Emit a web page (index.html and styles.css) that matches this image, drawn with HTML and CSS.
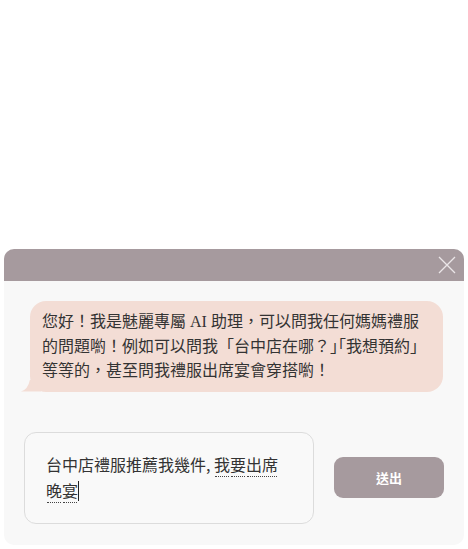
FILE: index.html
```html
<!DOCTYPE html>
<html lang="zh-Hant">
<head>
<meta charset="utf-8">
<link rel="stylesheet" href="styles.css">
</head>
<body>
<div class="chat">
  <div class="chat-header">
    <svg class="close" width="18" height="18" viewBox="0 0 18 18"><path d="M1 1L17 17M17 1L1 17" stroke="#ebe6e8" stroke-width="1.3" fill="none"/></svg>
  </div>
  <div class="chat-body">
    <div class="bubble">您好！我是魅麗專屬 AI 助理，可以問我任何媽媽禮服<br>的問題喲！例如可以問我「台中店在哪？<span class="halt">」「</span>我想預約」<br>等等的，甚至問我禮服出席宴會穿搭喲！</div>
    <div class="composer">
      <div class="input">台中店禮服推薦我幾件, <span class="sp">我</span><span class="sp">要</span><span class="sp">出席</span><br><span class="sp">晚</span><span class="sp">宴</span><span class="caret"></span></div>
      <button class="send">送出</button>
    </div>
  </div>
</div>
</body>
</html>
```
FILE: styles.css
```css
html, body { margin: 0; padding: 0; background: #ffffff; }
body { width: 468px; height: 549px; position: relative; overflow: hidden; }
.chat {
  position: absolute; left: 4px; top: 249px; width: 460px; height: 296px;
  border-radius: 10px; overflow: hidden; background: #f8f8f8;
  display: flex; flex-direction: column;
}
.chat-header {
  height: 32px; background: #a69a9e; flex: none;
  display: flex; justify-content: flex-end; align-items: center; padding-right: 8px;
}
.close { display: block; }
.chat-body { flex: 1; padding: 20px 0 0 26px; position: relative; }
.bubble {
  position: relative; width: 401px; padding: 9px 0 8px 12px; white-space: nowrap;
  background: #f3ddd5; border-radius: 16px;
  font-family: "Liberation Serif", "Noto Sans CJK TC", serif; font-size: 16px; line-height: 24.5px; color: #333;
}
.halt { font-feature-settings: "halt"; }
.bubble::before {
  content: ""; position: absolute; left: -9px; bottom: 0; width: 20px; height: 12px;
  background: #f3ddd5;
  clip-path: path("M0 12 Q7 10 9 0 L20 0 L20 12 Z");
}
.composer { display: flex; align-items: center; margin-top: 40px; margin-left: -6px; }
.input {
  width: 247px; height: 52px; padding: 18px 20px 20px 21px; border: 1px solid #dcdcdc;
  border-radius: 12px; background: #f9f9f9;
  font-family: "Noto Sans CJK TC", sans-serif; font-size: 16px; line-height: 26px; color: #333;
}
.sp { position: relative; }
.sp::after {
  content: ""; position: absolute; left: 1px; right: 1px; bottom: -1px;
  border-bottom: 1px dotted #444;
}
.caret { display: inline-block; width: 1px; height: 20px; background: #222; vertical-align: -4px; }
.send {
  margin-left: 20px; width: 110px; height: 41px; border: none; border-radius: 9px;
  background: #a69a9e; color: #fff; font-family: "Noto Sans CJK TC", sans-serif;
  font-size: 13px; font-weight: bold; padding: 0;
}
```
